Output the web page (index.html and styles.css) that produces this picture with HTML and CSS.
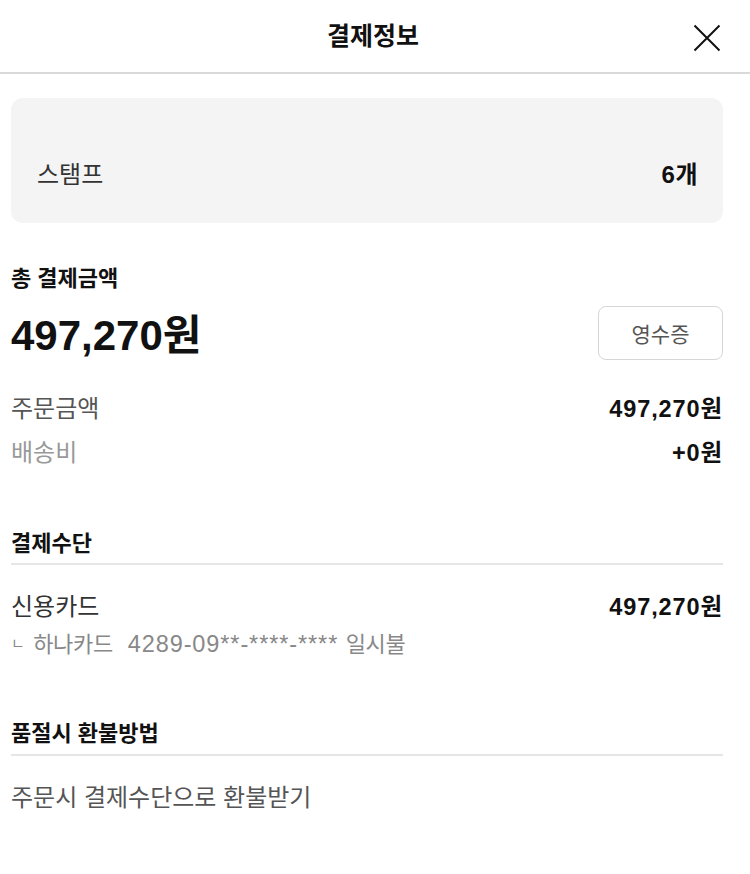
FILE: index.html
```html
<!DOCTYPE html>
<html lang="ko">
<head>
<meta charset="utf-8">
<link rel="stylesheet" href="styles.css">
</head>
<body>
<header class="header">
  <h1 class="title">결제정보</h1>
  <button class="close" aria-label="닫기">
    <svg width="28" height="28" viewBox="0 0 28 28"><path d="M1.5 1.5L26.5 26.5M26.5 1.5L1.5 26.5" stroke="#111" stroke-width="2" fill="none"/></svg>
  </button>
</header>
<main class="content">
  <div class="stamp">
    <span class="stamp-label">스탬프</span>
    <span class="stamp-value">6개</span>
  </div>

  <section class="total">
    <h2 class="sec-title">총 결제금액</h2>
    <div class="total-row">
      <span class="total-amount">497,270원</span>
      <button class="receipt">영수증</button>
    </div>
    <div class="row first">
      <span class="label">주문금액</span>
      <span class="value">497,270원</span>
    </div>
    <div class="row">
      <span class="label light">배송비</span>
      <span class="value">+0원</span>
    </div>
  </section>

  <section class="block">
    <h2 class="sec-title ruled">결제수단</h2>
    <div class="row pay">
      <span class="label dark">신용카드</span>
      <span class="value">497,270원</span>
    </div>
    <div class="card-info"><span class="bullet">ㄴ</span> <span class="card-name">하나카드</span>&nbsp; 4289-09**-****-**** <span class="card-name">일시불</span></div>
  </section>

  <section class="block refund">
    <h2 class="sec-title ruled">품절시 환불방법</h2>
    <p class="refund-text">주문시 결제수단으로 환불받기</p>
  </section>
</main>
</body>
</html>
```
FILE: styles.css
```css
* { box-sizing: border-box; }
body {
  margin: 0;
  background: #fff;
  font-family: "Liberation Sans", "Noto Sans CJK KR", sans-serif;
  color: #111;
}
.header {
  height: 74px;
  border-bottom: 2px solid #d9d9d9;
  display: flex;
  align-items: center;
  justify-content: center;
  position: relative;
}
.title {
  margin: 0;
  font-size: 25px;
  font-weight: 700;
  line-height: 30px;
  color: #111;
  padding-right: 4px;
}
.close {
  position: absolute;
  right: 29px;
  top: 24px;
  background: none;
  border: 0;
  padding: 0;
  width: 28px;
  height: 28px;
}
.close svg { display: block; }
.content {
  padding: 24px 27px 0 11px;
}
.stamp {
  background: #f4f4f4;
  border-radius: 12px;
  display: flex;
  justify-content: space-between;
  padding: 53px 25px 24px 26px;
  font-size: 24px;
  line-height: 48px;
}
.stamp-label { color: #333; }
.stamp-value { font-weight: 700; letter-spacing: 0.5px; }
.sec-title {
  margin: 0;
  font-size: 22px;
  font-weight: 700;
  line-height: 30px;
  color: #111;
}
.total { padding-top: 41px; }
.total-row {
  display: flex;
  justify-content: space-between;
  align-items: flex-start;
  margin-top: 12px;
}
.total-amount {
  font-size: 42px;
  font-weight: 700;
  line-height: 54px;
  margin-top: 3px;
  letter-spacing: 0;
}
.receipt {
  width: 125px;
  height: 54px;
  border: 1px solid #d6d6d6;
  border-radius: 8px;
  background: #fff;
  font-family: "Liberation Sans", "Noto Sans CJK KR", sans-serif;
  font-size: 21px;
  color: #555;
  padding: 0;
}
.row {
  display: flex;
  justify-content: space-between;
  align-items: center;
  font-size: 24px;
  line-height: 44px;
}
.row.first { margin-top: 24px; }
.label { color: #555; }
.label.light { color: #999; }
.label.dark { color: #333; }
.value { font-weight: 700; color: #111; font-size: 23.5px; letter-spacing: 0.9px; }
.block { padding-top: 54px; }
.ruled {
  border-bottom: 2px solid #e6e6e6;
  padding-bottom: 4px;
}
.pay { margin-top: 20px; }
.card-info {
  height: 30px;
  font-size: 23.5px;
  color: #888;
  line-height: 30px;
  letter-spacing: 0.9px;
  white-space: nowrap;
}
.bullet { font-size: 15px; line-height: 1; vertical-align: 3px; }
.card-name { font-size: 22px; line-height: 1; letter-spacing: -0.3px; }
.refund { padding-top: 60px; }
.refund .ruled { padding-bottom: 5px; }
.refund-text {
  margin: 27px 0 0;
  font-size: 24px;
  line-height: 30px;
  color: #555;
}
```
